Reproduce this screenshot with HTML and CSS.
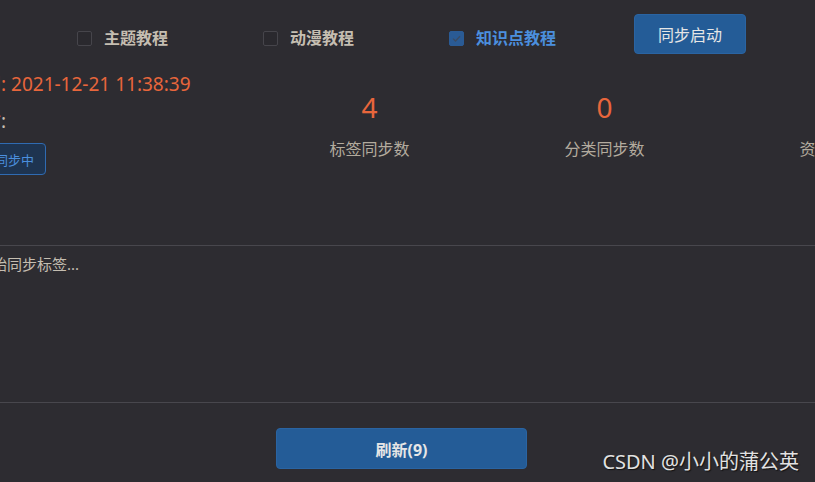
FILE: index.html
```html
<!DOCTYPE html>
<html>
<head>
	<meta charset="utf-8">
	<title>数据同步</title>
	<link rel="stylesheet" href="styles.css">
</head>
<body>
	<div class="toolbar">
		<label class="opt"><span class="box"></span><span class="txt">主题教程</span></label>
		<label class="opt"><span class="box"></span><span class="txt">动漫教程</span></label>
		<label class="opt on">
			<span class="box"><svg width="15" height="15" viewBox="0 0 15 15"><path d="M4 7.6 L6.5 10 L11 5.2" fill="none" stroke="#3b4c63" stroke-width="1.3"/></svg></span>
			<span class="txt">知识点教程</span>
		</label>
		<a href="javascript:;" class="btn start">同步启动</a>
	</div>
	<div class="main">
		<div class="info">
			<div class="line time">同步时间: 2021-12-21 11:38:39</div>
			<div class="line used"><span class="cut">耗时</span>:</div>
			<a href="javascript:;" class="state">正在同步中</a>
		</div>
		<div class="stats">
			<div class="stat"><div class="num">4</div><div class="lbl">标签同步数</div></div>
			<div class="stat"><div class="num">0</div><div class="lbl">分类同步数</div></div>
			<div class="stat"><div class="num">0</div><div class="lbl">资源同步数</div></div>
		</div>
	</div>
	<div class="log">
		<p>开始同步标签...</p>
	</div>
	<div class="footer">
		<a href="javascript:;" class="btn refresh">刷新(9)</a>
	</div>
	<div class="mark">CSDN @小小的蒲公英</div>
</body>
</html>
```

FILE: styles.css
```css
* { margin: 0; padding: 0; text-decoration: none; box-sizing: border-box;}
html, body { height: 100%; overflow: hidden;}
body { background: #2d2c31; color: #bdb5a8; font-family: "Noto Sans", "Noto Sans CJK SC", sans-serif; position: relative;}

.toolbar { display: flex; align-items: flex-start; height: 68px; padding: 14px 0 0 77px;}
.opt { display: flex; align-items: center; width: 186px; height: 24px; margin-top: 12px; cursor: pointer;}
.opt .box { width: 15px; height: 15px; border: 1px solid #46454b; border-radius: 2px; background: #2a292e; margin-right: 12px; flex: none;}
.opt .box svg { display: block; margin: -1px;}
.opt .txt { font-size: 16px; font-weight: bold; color: #c5beb1; line-height: 24px;}
.opt.on .box { background: #2a5b95; border-color: #2a5b95;}
.opt.on .txt { color: #4b8fde;}

.btn { display: flex; align-items: center; justify-content: center; background: #245c97; color: #e6e6e6; border-radius: 4px; border: 1px solid #2a64a2;}
.start { width: 112px; height: 40px; font-size: 16px; margin-left: -1px;}

.main { display: flex; height: 177px;}
.info { width: 252px; flex: none;}
.line { height: 32px; line-height: 32px; font-size: 19px; margin-left: -37px; white-space: nowrap;}
.time { color: #e8663c; margin-left: -75px;}
.used { margin-top: 5px; color: #c5beb1;}
.used .cut { color: #c0503a;}
.state { display: inline-flex; align-items: center; height: 32px; margin: 6px 0 0 -40px; padding: 0 11px 0 8px; border: 1px solid #2f6bb2; border-radius: 4px; background: #1e3450; color: #4b8fde; font-size: 13px;}

.stats { display: grid; grid-template-columns: repeat(3, 235px); padding-top: 19px; flex: none;}
.stat { text-align: center;}
.num { height: 40px; line-height: 40px; font-size: 28px; color: #e8663c;}
.lbl { height: 22px; line-height: 22px; margin-top: 11px; font-size: 16px; color: #b3ab9e;}

.log { height: 157px; border-top: 1px solid #48474d; padding-top: 7px;}
.log p { line-height: 22px; font-size: 15px; margin-left: -23px; color: #c5beb1;}

.footer { border-top: 1px solid #48474d; padding: 25px 0 0 276px;}
.refresh { width: 251px; height: 41px; font-size: 16px; font-weight: bold;}

.mark { position: absolute; right: 16px; bottom: 7px; font-size: 20px; color: #e2e2e2; text-shadow: 1px 1px 1px #111;}
```
